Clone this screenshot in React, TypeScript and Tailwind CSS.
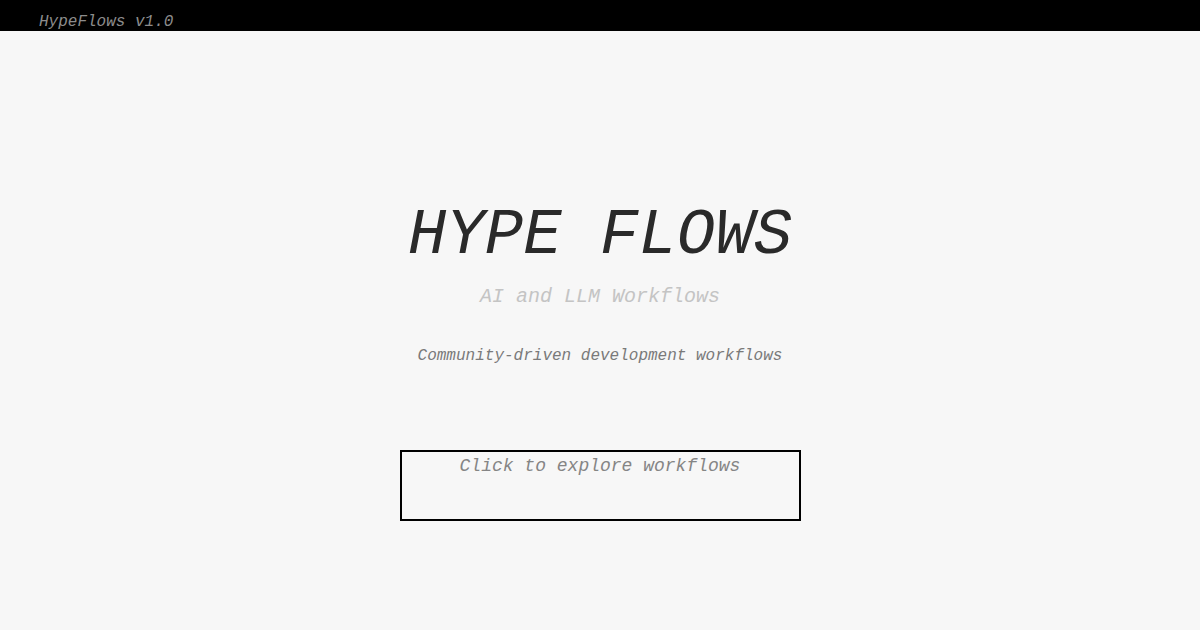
export default function App() {
  const mono = { fontFamily: '"Liberation Mono", "DejaVu Sans Mono", monospace' };
  return (
    <div className="w-[1200px] h-[630px] bg-[#f7f7f7] flex flex-col overflow-hidden" style={mono}>
      <div className="h-[31px] bg-black flex items-end pl-[39px]">
        <span className="text-[16px] leading-[24px] italic text-[#8c8c8c] font-light translate-y-[3px]">HypeFlows v1.0</span>
      </div>
      <div className="flex flex-col items-center pt-[170px]">
        <h1 className="text-[64px] leading-[70px] italic font-light text-[#2a2a2a]">HYPE FLOWS</h1>
        <p className="mt-[12px] text-[20px] leading-[28px] italic text-[#c4c4c4]">AI and LLM Workflows</p>
        <p className="mt-[33px] text-[16px] leading-[24px] italic text-[#7a7a7a]">Community-driven development workflows</p>
        <div className="mt-[82px] w-[401px] h-[71px] border-2 border-black flex justify-center pt-[1px]">
          <span className="text-[18px] leading-[26px] italic text-[#858585]">Click to explore workflows</span>
        </div>
      </div>
    </div>
  );
}
